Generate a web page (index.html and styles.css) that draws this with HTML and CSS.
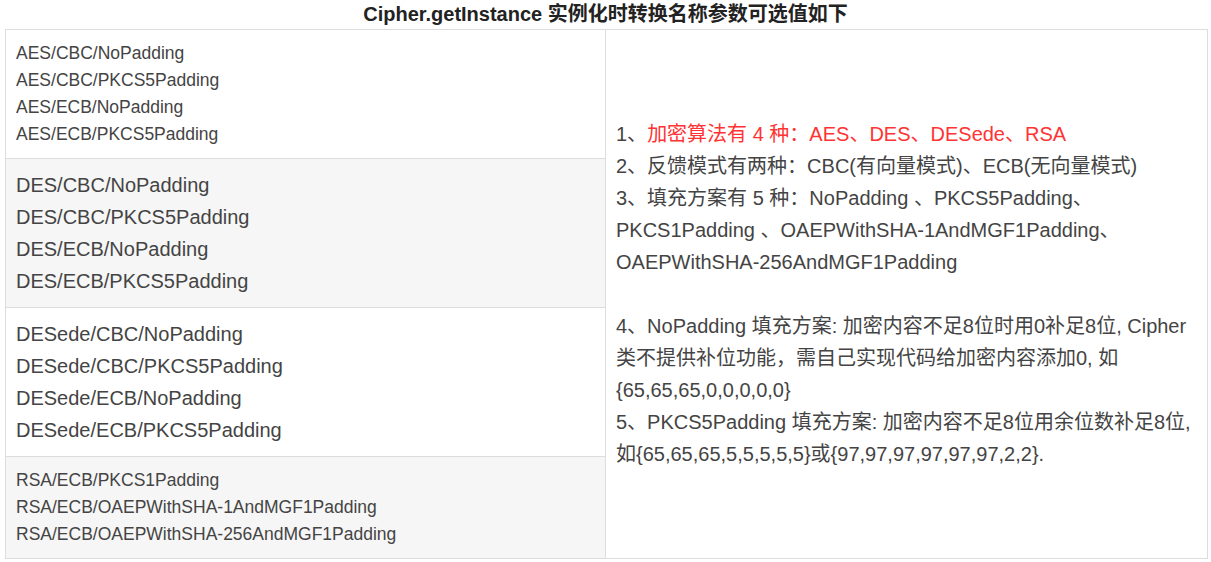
FILE: index.html
```html
<!DOCTYPE html>
<html lang="zh-CN">
<head>
<meta charset="utf-8">
<title>Cipher.getInstance</title>
<link rel="stylesheet" href="styles.css">
</head>
<body>
<h1 class="title">Cipher.getInstance 实例化时转换名称参数可选值如下</h1>
<table class="grid">
  <colgroup><col class="col-left"><col class="col-right"></colgroup>
  <tr class="row-a">
    <td class="cell small">AES/CBC/NoPadding<br>AES/CBC/PKCS5Padding<br>AES/ECB/NoPadding<br>AES/ECB/PKCS5Padding</td>
    <td class="cell notes" rowspan="4">
      1、<span class="red">加密算法有 4 种：AES、DES、DESede、RSA</span><br>
      2、反馈模式有两种：CBC(有向量模式)、ECB(无向量模式)<br>
      3、填充方案有 5 种：NoPadding 、PKCS5Padding、<br>
      PKCS1Padding 、OAEPWithSHA-1AndMGF1Padding、<br>
      OAEPWithSHA-256AndMGF1Padding<br>
      <br>
      4、NoPadding 填充方案: 加密内容不足8位时用0补足8位, Cipher<br>
      类不提供补位功能，需自己实现代码给加密内容添加0, 如<br>
      {65,65,65,0,0,0,0,0}<br>
      5、PKCS5Padding 填充方案: 加密内容不足8位用余位数补足8位,<br>
      如{65,65,65,5,5,5,5,5}或{97,97,97,97,97,97,2,2}.
    </td>
  </tr>
  <tr class="row-b">
    <td class="cell large">DES/CBC/NoPadding<br>DES/CBC/PKCS5Padding<br>DES/ECB/NoPadding<br>DES/ECB/PKCS5Padding</td>
  </tr>
  <tr class="row-a">
    <td class="cell large">DESede/CBC/NoPadding<br>DESede/CBC/PKCS5Padding<br>DESede/ECB/NoPadding<br>DESede/ECB/PKCS5Padding</td>
  </tr>
  <tr class="row-b">
    <td class="cell small">RSA/ECB/PKCS1Padding<br>RSA/ECB/OAEPWithSHA-1AndMGF1Padding<br>RSA/ECB/OAEPWithSHA-256AndMGF1Padding</td>
  </tr>
</table>
</body>
</html>
```
FILE: styles.css
```css
html, body {
  margin: 0;
  padding: 0;
  background: #ffffff;
}
body {
  font-family: "Liberation Sans", Arial, "Noto Sans CJK SC", sans-serif;
  color: #444444;
}
.title {
  margin: 0;
  height: 29px;
  line-height: 29px;
  font-size: 20px;
  font-weight: bold;
  color: #222222;
  text-align: center;
}
.grid {
  margin-left: 5px;
  width: 1202px;
  border-collapse: collapse;
  table-layout: fixed;
}
.col-left { width: 600px; }
.col-right { width: 602px; }
.cell {
  border: 1px solid #dddddd;
  padding: 10px 10px;
  vertical-align: middle;
  white-space: nowrap;
}
.row-a .cell { background: #ffffff; }
.row-b .cell { background: #f6f6f6; }
.grid .notes { background: #ffffff; }
.small {
  font-size: 17.5px;
  line-height: 27px;
  height: 108px;
}
.row-b .small { height: 81px; }
.large {
  font-size: 20px;
  line-height: 32px;
  height: 128px;
}
.notes {
  font-size: 20px;
  line-height: 32px;
}
.red { color: #ff3333; }
```
